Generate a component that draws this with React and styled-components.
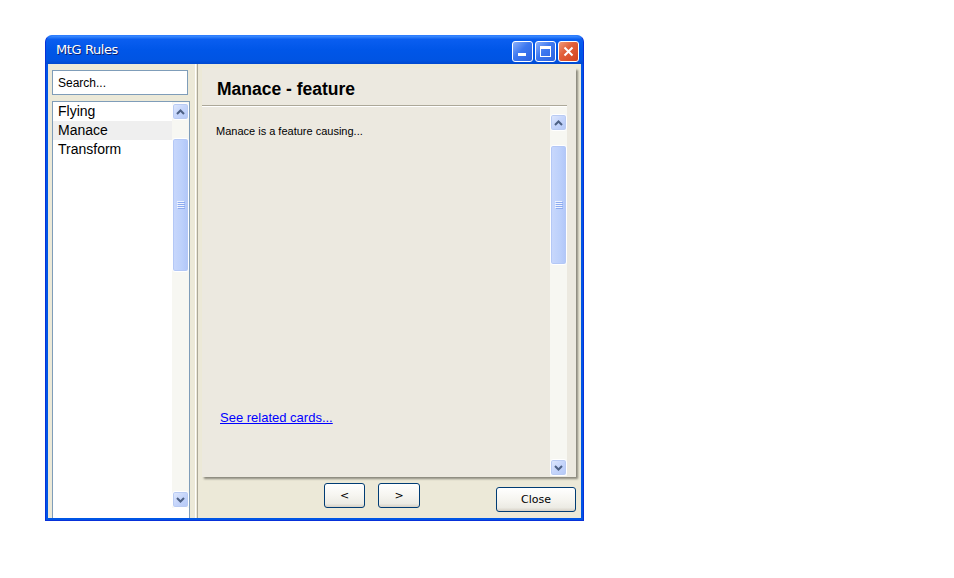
import styled, { createGlobalStyle } from 'styled-components'

const GlobalStyle = createGlobalStyle`
  body {
    margin: 0;
    background: #ffffff;
    font-family: "Liberation Sans", Arial, sans-serif;
  }
`

const Page = styled.div`
  padding: 35px 0 0 45px;
`

const Window = styled.div`
  width: 539px;
  height: 486px;
  display: flex;
  flex-direction: column;
  background: #0055e5;
  border-radius: 7px 7px 0 0;
  box-sizing: border-box;
  border: 1px solid #0831d9;
  border-top-color: #2d7dff;
`

const TitleBar = styled.div`
  height: 28px;
  display: flex;
  align-items: center;
  padding: 0 4px 0 10px;
  background: linear-gradient(#3d8cff 0%, #0a5ef0 12%, #0056e8 50%, #0054e3 85%, #0049d0 100%);
  border-radius: 6px 6px 0 0;
`

const Title = styled.div`
  flex: 1;
  color: #ffffff;
  font-size: 13px;
  font-family: "DejaVu Sans", sans-serif;
  letter-spacing: -0.4px;
  margin-top: -1px;
  text-shadow: 1px 1px 0 #0a1e6e;
`

const TitleButtons = styled.div`
  display: flex;
  gap: 2px;
  margin-top: 3px;
`

const TitleButton = styled.div`
  width: 21px;
  height: 21px;
  box-sizing: border-box;
  border: 1px solid #ffffff;
  border-radius: 3px;
  background: ${p => p.$close
    ? 'linear-gradient(135deg, #f09a7a 0%, #e2603a 40%, #d4431e 100%)'
    : 'linear-gradient(135deg, #8cb0fa 0%, #3d78f0 45%, #2b62e0 100%)'};
  display: flex;
  align-items: center;
  justify-content: center;
`

const Client = styled.div`
  flex: 1;
  margin: 0 2px 2px 2px;
  background: #ece9d8;
  display: flex;
  min-height: 0;
`

const LeftPane = styled.div`
  width: 147px;
  padding: 6px 0 0 4px;
  box-sizing: border-box;
  display: flex;
  flex-direction: column;
`

const SearchBox = styled.div`
  width: 136px;
  height: 25px;
  box-sizing: border-box;
  border: 1px solid #7f9db9;
  background: #ffffff;
  font-size: 12px;
  padding: 5px 0 0 5px;
  color: #000000;
`

const ListBox = styled.div`
  margin-top: 6px;
  width: 138px;
  flex: 1;
  box-sizing: border-box;
  border: 1px solid #7f9db9;
  border-bottom: none;
  background: #ffffff;
  display: flex;
`

const ListItems = styled.div`
  flex: 1;
`

const ListItem = styled.div`
  height: 19px;
  line-height: 19px;
  padding-left: 5px;
  font-size: 14px;
  color: #000000;
  background: ${p => (p.$selected ? '#efefef' : 'transparent')};
`

const Splitter = styled.div`
  width: 3px;
  border-left: 1px solid #ffffff;
  border-right: 1px solid #aca899;
  box-sizing: border-box;
`

const RightPane = styled.div`
  flex: 1;
  display: flex;
  flex-direction: column;
  padding: 4px 2px 0 4px;
`

const Panel = styled.div`
  height: 409px;
  width: 374px;
  background: #ece9e0;
  box-shadow: 2px 2px 2px #8a887c;
  display: flex;
  flex-direction: column;
  margin-right: 2px;
`

const Heading = styled.h1`
  margin: 0;
  height: 37px;
  box-sizing: border-box;
  padding: 11px 0 0 15px;
  font-size: 17.5px;
  font-weight: bold;
  color: #000000;
  font-family: "Liberation Sans", Arial, sans-serif;
`

const Rule = styled.div`
  width: 365px;
  border-top: 1px solid #aca899;
  border-bottom: 1px solid #ffffff;
`

const Body = styled.div`
  flex: 1;
  display: flex;
  width: 365px;
  min-height: 0;
`

const Content = styled.div`
  flex: 1;
  display: flex;
  flex-direction: column;
  padding: 18px 0 0 14px;
`

const Text = styled.div`
  font-size: 11px;
  font-family: "Liberation Sans", Arial, sans-serif;
  color: #000000;
`

const Link = styled.a`
  margin-top: auto;
  margin-bottom: 52px;
  margin-left: 4px;
  font-size: 13px;
  color: #0000ff;
  text-decoration: underline;
  cursor: pointer;
`

const ScrollBar = styled.div`
  width: 17px;
  display: flex;
  flex-direction: column;
  background: #f7f7f2;
  padding: ${p => p.$pad};
  height: ${p => p.$height}px;
  box-sizing: border-box;
`

const ArrowButton = styled.div`
  width: 17px;
  height: 17px;
  box-sizing: border-box;
  border: 1px solid #ffffff;
  border-radius: 3px;
  background: linear-gradient(135deg, #e0e9fd 0%, #c5d5fb 50%, #b4c8f6 100%);
  box-shadow: inset 0 0 0 1px #b9cbf3;
  display: flex;
  align-items: center;
  justify-content: center;
`

const Track = styled.div`
  flex: 1;
`

const Thumb = styled.div`
  width: 17px;
  box-sizing: border-box;
  border: 1px solid #ffffff;
  border-radius: 3px;
  background: linear-gradient(90deg, #c9d8fc 0%, #bcd0fb 60%, #b1c6f8 100%);
  box-shadow: inset 0 0 0 1px #b4c8f6;
  display: flex;
  align-items: center;
  justify-content: center;
`

const Grip = () => (
  <svg width="8" height="8" viewBox="0 0 8 8">
    {[0, 2, 4, 6].map(y => (
      <rect key={y} x="0" y={y} width="7" height="1" fill="#eef3fe" />
    ))}
    {[1, 3, 5, 7].map(y => (
      <rect key={y} x="1" y={y} width="7" height="1" fill="#8caaf0" />
    ))}
  </svg>
)

const Chevron = ({ up }) => (
  <svg width="9" height="6" viewBox="0 0 9 6">
    <path
      d={up ? 'M1 5 L4.5 1.5 L8 5' : 'M1 1 L4.5 4.5 L8 1'}
      fill="none"
      stroke="#4d6185"
      strokeWidth="2"
    />
  </svg>
)

const Scroller = ({ height, thumbTop, thumbHeight, pad }) => (
  <ScrollBar $height={height} $pad={pad}>
    <ArrowButton><Chevron up /></ArrowButton>
    <Track>
      <Thumb style={{ marginTop: thumbTop, height: thumbHeight }}>
        <Grip />
      </Thumb>
    </Track>
    <ArrowButton><Chevron /></ArrowButton>
  </ScrollBar>
)

const ButtonRow = styled.div`
  flex: 1;
  display: flex;
  align-items: flex-start;
  padding-top: 6px;
`

const NavGroup = styled.div`
  display: flex;
  gap: 13px;
  margin-left: 122px;
`

const Button = styled.button`
  width: ${p => p.$width}px;
  height: ${p => p.$height}px;
  margin-top: ${p => p.$top || 0}px;
  margin-left: ${p => p.$left || 0}px;
  box-sizing: border-box;
  border: 1px solid #003c74;
  border-radius: 3px;
  background: linear-gradient(#ffffff 0%, #f6f5f0 50%, #ecebe4 85%, #d6d0c5 100%);
  font-family: "DejaVu Sans", sans-serif;
  font-size: 11px;
  color: #000000;
  padding: 0;
  cursor: pointer;
`

const App = () => {
  return (
    <Page>
      <GlobalStyle />
      <Window>
        <TitleBar>
          <Title>MtG Rules</Title>
          <TitleButtons>
            <TitleButton>
              <svg width="13" height="13" viewBox="0 0 13 13">
                <rect x="2" y="8" width="8" height="3" fill="#ffffff" />
              </svg>
            </TitleButton>
            <TitleButton>
              <svg width="13" height="13" viewBox="0 0 13 13">
                <rect x="1.5" y="1.5" width="10" height="10" fill="none" stroke="#ffffff" strokeWidth="1" />
                <rect x="1" y="1" width="11" height="3" fill="#ffffff" />
              </svg>
            </TitleButton>
            <TitleButton $close>
              <svg width="13" height="13" viewBox="0 0 13 13">
                <path d="M2.5 2.5 L10.5 10.5 M10.5 2.5 L2.5 10.5" stroke="#ffffff" strokeWidth="2" />
              </svg>
            </TitleButton>
          </TitleButtons>
        </TitleBar>
        <Client>
          <LeftPane>
            <SearchBox>Search...</SearchBox>
            <ListBox>
              <ListItems>
                <ListItem>Flying</ListItem>
                <ListItem $selected>Manace</ListItem>
                <ListItem>Transform</ListItem>
              </ListItems>
              <Scroller height={406} thumbTop={18} thumbHeight={134} pad="1px 0 0 0" />
            </ListBox>
          </LeftPane>
          <Splitter />
          <RightPane>
            <Panel>
              <Heading>Manace - feature</Heading>
              <Rule />
              <Body>
                <Content>
                  <Text>Manace is a feature causing...</Text>
                  <Link>See related cards...</Link>
                </Content>
                <Scroller height={369} thumbTop={14} thumbHeight={120} pad="7px 0 0 0" />
              </Body>
            </Panel>
            <ButtonRow>
              <NavGroup>
                <Button $width={41} $height={25}>&lt;</Button>
                <Button $width={42} $height={25}>&gt;</Button>
              </NavGroup>
              <Button $width={80} $height={25} $top={4} $left={76}>Close</Button>
            </ButtonRow>
          </RightPane>
        </Client>
      </Window>
    </Page>
  )
}

export default App
